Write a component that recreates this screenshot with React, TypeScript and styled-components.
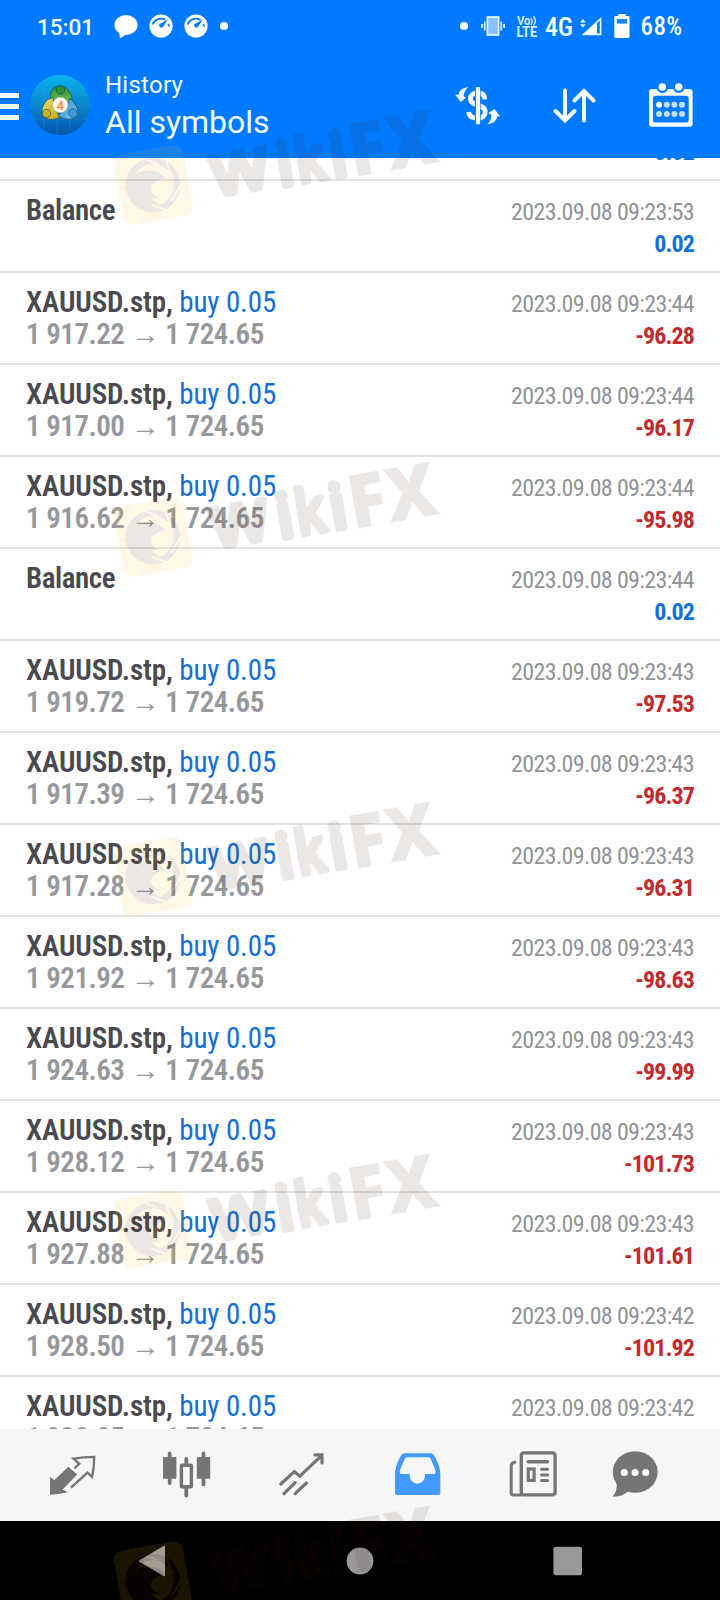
import React from "react";
import styled, { createGlobalStyle } from "styled-components";

const GlobalStyle = createGlobalStyle`
  * { box-sizing: border-box; }
  body { margin: 0; background: #fff; font-family: Roboto, sans-serif; }
  svg { display: block; flex: none; }
`;

const Screen = styled.div`
  position: relative;
  width: 720px;
  height: 1600px;
  overflow: hidden;
  display: flex;
  flex-direction: column;
  background: #fff;
`;

const Header = styled.header`
  height: 158px;
  flex: none;
  background: #007aff;
  color: #f2fbff;
`;

const StatusBar = styled.div`
  height: 52px;
  display: flex;
  align-items: center;
  justify-content: space-between;
  padding: 0 36px 0 37px;
`;

const StatusGroup = styled.div`
  display: flex;
  align-items: center;
`;

const Slot = styled.div<{ $gap: number }>`
  flex: none;
  margin-left: ${(p) => p.$gap}px;
`;

const Clock = styled.span`
  font-size: 22.5px;
  line-height: 26px;
  font-weight: 500;
  width: 65px;
  padding-top: 2px;
`;

const StatusText = styled.div<{ $width: number; $size: number; $spacing?: number }>`
  font-family: "Roboto Condensed", Roboto, sans-serif;
  font-size: ${(p) => p.$size}px;
  line-height: 26px;
  font-weight: 500;
  letter-spacing: ${(p) => p.$spacing ?? 0}px;
  width: ${(p) => p.$width}px;
  padding-top: 2px;
  white-space: nowrap;
`;

const Toolbar = styled.div`
  height: 106px;
  display: flex;
  align-items: center;
  padding-right: 26px;
`;

const MenuButton = styled.div`
  width: 30px;
  height: 27px;
  margin-top: 3px;
  display: flex;
  flex-direction: column;
  justify-content: space-between;
`;

const MenuBar = styled.span`
  width: 19px;
  height: 5px;
  background: #f2fbff;
`;

const Titles = styled.div`
  margin-left: 15px;
  padding-top: 2px;
  flex: 1;
  white-space: nowrap;
`;

const Subtitle = styled.div`
  font-size: 24px;
  line-height: 30px;
  letter-spacing: 0.25px;
`;

const Title = styled.div`
  font-size: 32px;
  line-height: 40px;
  padding-top: 2px;
`;

const Actions = styled.div`
  display: flex;
  gap: 48px;
`;

const List = styled.main`
  flex: 1;
  min-height: 0;
  overflow: hidden;
`;

const Row = styled.div<{ $first?: boolean }>`
  height: 92px;
  margin-top: ${(p) => (p.$first ? "-69px" : "0")};
  padding: 13px 26px 0;
  border-bottom: 2px solid #e3e3e3;
  font-family: "Roboto Condensed", Roboto, sans-serif;
`;

const Line = styled.div`
  height: 32px;
  line-height: 32px;
  display: flex;
  justify-content: space-between;
  align-items: baseline;
  white-space: nowrap;
`;

const Symbol = styled.span<{ $tight?: boolean }>`
  font-size: 29px;
  font-weight: 600;
  letter-spacing: ${(p) => (p.$tight ? "-0.45px" : "-0.1px")};
  color: #49494f;
`;

const Side = styled.span`
  font-weight: 400;
  color: #1270d4;
`;

const Prices = styled.span`
  font-size: 29px;
  font-weight: 600;
  letter-spacing: -0.5px;
  color: #97989b;
`;

const Time = styled.span`
  font-size: 24px;
  font-weight: 400;
  letter-spacing: -0.65px;
  color: #929397;
`;

const Amount = styled.span<{ $gain?: boolean }>`
  font-size: 24px;
  font-weight: 700;
  letter-spacing: -0.9px;
  color: ${(p) => (p.$gain ? "#1272d6" : "#c22a2c")};
`;

const TabBar = styled.nav`
  height: 92px;
  flex: none;
  display: flex;
  align-items: center;
  gap: 67px;
  padding-left: 48px;
  background: #f6f6f6;

  svg:nth-child(4) { margin-left: 1px; }
  svg:last-child { margin-left: -13px; }
`;

const SystemBar = styled.footer`
  height: 79px;
  flex: none;
  display: flex;
  align-items: center;
  gap: 176px;
  padding-left: 136px;
  background: #000;
`;

const WatermarkLayer = styled.div<{ $top: number }>`
  position: absolute;
  left: 100px;
  top: ${(p) => p.$top}px;
  opacity: 0.1;
  pointer-events: none;
`;

const ChatBubble = () => (
  <svg width="24" height="24" viewBox="0 0 24 24" fill="#fff">
    <ellipse cx="12" cy="11" rx="11.6" ry="10" />
    <path d="M5 17 L6 24.3 L14 19.5Z" />
  </svg>
);

const Gauge = () => (
  <svg width="24" height="24" viewBox="0 0 24 24">
    <circle cx="12" cy="12" r="11.6" fill="#fff" />
    <path d="M3.6 10.5 C5.5 5 12 3.2 16.5 6" fill="none" stroke="#007aff" strokeWidth="1.8" />
    <path d="M19 5.6 L13.8 13 A2.3 2.3 0 0 1 10.3 10.2Z" fill="#007aff" />
    <path d="M19 10 L20.6 12.5" stroke="#007aff" strokeWidth="1.4" />
  </svg>
);

const Dot = () => (
  <svg width="8" height="8" viewBox="0 0 8 8">
    <circle cx="4" cy="4" r="4" fill="#fff" />
  </svg>
);

const Vibrate = () => (
  <svg width="24" height="20" viewBox="0 0 24 20" stroke="#e8f6ff" strokeWidth="1.7">
    <rect x="6.4" y="1" width="11.2" height="18" fill="#8cc2fb" />
    <path d="M3.7 5.5V14.5M20.3 5.5V14.5M0.9 8V12M23.1 8V12" fill="none" />
  </svg>
);

const VoLte = () => (
  <svg width="22" height="24" viewBox="0 0 22 24" fill="#d6eaff">
    <text x="1" y="11.2" fontSize="12.5" fontWeight="700" fontFamily="Roboto" textLength="13.5" lengthAdjust="spacingAndGlyphs">Vo</text>
    <path d="M15 4 Q17.2 7.5 15 11 M17.4 2.2 Q21.4 6.8 17.4 11.6" fill="none" stroke="#d6eaff" strokeWidth="1.4" />
    <text x="0.5" y="23.2" fontSize="14" fontWeight="800" fontFamily="Roboto" textLength="20.5" lengthAdjust="spacingAndGlyphs">LTE</text>
  </svg>
);

const Signal = () => (
  <svg width="22" height="20" viewBox="0 0 22 20" fill="#f2fbff">
    <path d="M1.6 19.3 L21.4 1 V19.3Z" />
    <path d="M17 7 L19.8 4.5 V17.6 H17Z" fill="#007aff" />
    <path d="M0 6.4 L2.9 3 L5.8 6.4Z M0 8.2 L2.9 11.6 L5.8 8.2Z" />
  </svg>
);

const Battery = () => (
  <svg width="16" height="24" viewBox="0 0 16 24" fill="#fff">
    <rect x="4.3" y="0" width="7.4" height="4" />
    <rect x="0.3" y="2" width="15.2" height="22" rx="1.4" />
    <rect x="2.8" y="5" width="10.2" height="4.6" fill="#1b86fb" />
  </svg>
);

const AppLogo = () => (
  <svg width="60" height="60" viewBox="0 0 60 60">
    <defs>
      <linearGradient id="sky" x1="0" y1="0" x2="0" y2="1">
        <stop offset="0" stopColor="#08b4ea" />
        <stop offset="0.5" stopColor="#0a86d0" />
        <stop offset="1" stopColor="#0455ae" />
      </linearGradient>
      <linearGradient id="leaf" x1="0" y1="0" x2="0" y2="1">
        <stop offset="0" stopColor="#2c8c2c" />
        <stop offset="1" stopColor="#7cc465" />
      </linearGradient>
      <linearGradient id="gold" x1="0" y1="0" x2="1" y2="1">
        <stop offset="0" stopColor="#ece06a" />
        <stop offset="1" stopColor="#bfa51c" />
      </linearGradient>
      <linearGradient id="aqua" x1="0" y1="0" x2="1" y2="1">
        <stop offset="0" stopColor="#2f86cc" />
        <stop offset="1" stopColor="#7cc8f4" />
      </linearGradient>
    </defs>
    <circle cx="30" cy="30" r="30" fill="url(#sky)" />
    <path d="M14 5V55M27 0V60M40 2V58M2 19H58M0 31H60M3 44H57" stroke="#39a5e4" strokeWidth="0.6" opacity="0.45" />
    <g stroke="#174f5e" strokeWidth="0.7">
      <path d="M21 24 C19 16 24 11 30 11 C36 11 42 17 42 25 L39 31 L24 26Z" fill="url(#leaf)" />
      <path d="M23 23 C15 23 11 33 12 40 C15 45 24 46 30 42 L25 34Z" fill="url(#gold)" />
      <path d="M40 23 C45 28 49 35 48 40 C45 45 34 46 28 40 L36 35Z" fill="url(#aqua)" />
      <circle cx="30.5" cy="15" r="4.2" fill="#2d9130" />
      <circle cx="16.5" cy="38.5" r="4.2" fill="#cbb22b" />
      <circle cx="43" cy="38" r="4.2" fill="#3e9be0" />
    </g>
    <circle cx="30.3" cy="30" r="7.7" fill="#fbf6f1" stroke="#b9b79a" strokeWidth="0.6" />
    <text x="30.3" y="34.6" textAnchor="middle" fontFamily="Roboto" fontSize="13" fontWeight="700" fill="#ee9152">4</text>
  </svg>
);

const CurrencyIcon = () => (
  <svg width="48" height="48" viewBox="0 0 48 48" fill="#f4fcff">
    <path d="M14.5 6 Q5 7 4.6 14 L1 13.3 L6.7 21 L12.3 16.6 L9.6 15.6 Q10 9.5 14.5 6Z" />
    <path d="M33.3 43.2 Q42.5 42 43.2 35.3 L46.2 35.6 L40.5 28 L34.3 32 L37.4 33.6 Q37.6 39.5 33.3 43.2Z" />
    <path d="M30.8 18.4 C30.8 13.5 27.5 12 24 12 C18.5 12 16.3 14.8 16.3 17.8 C16.3 25.6 31.2 22.4 31.2 30.8 C31.2 35 28 37.2 24 37.2 C18.8 37.2 15 35.4 14.6 31" fill="none" stroke="#f4fcff" strokeWidth="4.8" />
    <path d="M23.8 9 V41" stroke="#007aff" strokeWidth="5.8" />
    <path d="M24 6.2 V43.2" stroke="#f4fcff" strokeWidth="4.2" />
  </svg>
);

const SortIcon = () => (
  <svg width="48" height="48" viewBox="0 0 48 48" fill="none" stroke="#f4fcff" strokeWidth="4" strokeLinecap="round">
    <path d="M15 9.5 V38.5 M5.5 30 L15 39.5 L24.5 30" />
    <path d="M34 39.5 V10.5 M24.5 19.5 L34 10 L43.5 19.5" />
  </svg>
);

const CalendarIcon = () => (
  <svg width="48" height="48" viewBox="0 0 48 48">
    <rect x="3" y="8" width="43.6" height="37.8" rx="3" fill="#f4fcff" />
    <rect x="6.9" y="14.8" width="35.8" height="26.8" rx="3.2" fill="#007aff" />
    {[16.3, 32.7].map((x) => (
      <circle key={x} cx={x} cy="6" r="4.9" fill="#f4fcff" stroke="#007aff" strokeWidth="2.2" />
    ))}
    {[23.7, 33].map((y) =>
      [13.1, 20.8, 28.4, 36].map((x) => (
        <circle key={`${x}-${y}`} cx={x} cy={y} r="3" fill={x < 14 && y < 30 ? "#fff" : "#bde0ff"} />
      ))
    )}
  </svg>
);

const QuotesIcon = () => (
  <svg width="48" height="48" viewBox="0 0 48 48">
    <path d="M20.3 15.7 L29.2 23.6 L14.6 38.4 L19.8 41.2 Q11 43.4 2 43.8 V25.8 L6.2 29.2Z" fill="#757575" />
    <path d="M26.3 17.3 L31.3 12.8 L25.4 7.6 Q36 5.9 46.2 5.8 Q46.2 17 44 26 L39.5 21.6 L23 36.6" fill="none" stroke="#757575" strokeWidth="2.3" />
  </svg>
);

const ChartIcon = () => (
  <svg width="48" height="48" viewBox="0 0 48 48">
    <g fill="#757575">
      <rect x="0" y="6" width="13.4" height="21.8" rx="1" />
      <rect x="33.8" y="6" width="13.4" height="21.8" rx="1" />
    </g>
    <path d="M6.7 2.4 V32 M40.5 2.4 V33.4 M23.3 8 V13 M23.3 37 V44.5" stroke="#757575" strokeWidth="3.8" strokeLinecap="round" />
    <rect x="18.4" y="14.2" width="10" height="21.5" rx="0.5" fill="#f6f6f6" stroke="#757575" strokeWidth="3.4" />
  </svg>
);

const TradeIcon = () => (
  <svg width="48" height="48" viewBox="0 0 48 48" fill="none" stroke="#757575" strokeWidth="3.2" strokeLinecap="round">
    <path d="M2.8 33 L16.4 20.6 L21.9 25.2 L43.3 4.8 M37 3.9 H44 V12" />
    <path d="M6 42.6 L17.2 31.6 M17.2 42.6 L28.4 32" />
  </svg>
);

const HistoryIcon = () => (
  <svg width="48" height="48" viewBox="0 0 48 48">
    <path
      fillRule="evenodd"
      fill="#429aff"
      d="M10.5 2.3 H36.7 Q39 2.3 40.2 4.5 C43.5 11 46.3 15.5 46.3 24 V42 Q46.3 44 44.3 44 H3 Q1 44 1 42 V24 C1 15.5 3.8 11 7 4.5 Q8.2 2.3 10.5 2.3Z M12.8 6.3 Q11.4 6.3 10.7 7.8 L5.9 19.5 Q5.2 23 8 23 H15.7 V24.5 A7.65 8.2 0 0 0 31 24.5 V23 H39.4 Q42.2 23 41.5 19.5 L36.7 7.8 Q36 6.3 34.6 6.3Z"
    />
  </svg>
);

const NewsIcon = () => (
  <svg width="48" height="48" viewBox="0 0 48 48" fill="none" stroke="#757575" strokeLinecap="round">
    <rect x="12.3" y="1.9" width="33.8" height="42" rx="2.5" strokeWidth="3.4" />
    <path d="M12 43.9 H4.5 Q2.2 43.9 2.2 41.5 V15 Q2.2 11.6 5.8 11.2" strokeWidth="3" />
    <path d="M19.3 10.8 H38.4" strokeWidth="3.6" />
    <path d="M32.5 18.2 H38.6 M32.5 24 H38.6 M32.5 29.6 H38.6" strokeWidth="3" />
    <rect x="19.3" y="18" width="5.8" height="11.4" strokeWidth="3.2" />
  </svg>
);

const MessagesIcon = () => (
  <svg width="48" height="48" viewBox="0 0 48 48" fill="#757575">
    <ellipse cx="24.2" cy="21" rx="22.5" ry="20.8" />
    <path d="M5.5 31 Q7 39.5 1.6 45.6 Q11.5 46 17.5 40Z" />
    {[13.3, 24, 34.7].map((x) => (
      <circle key={x} cx={x} cy="21.4" r="3.5" fill="#fff" />
    ))}
  </svg>
);

const BackIcon = () => (
  <svg width="32" height="32" viewBox="0 0 32 32">
    <path d="M3 16 L28.5 1 V31Z" fill="#999" stroke="#999" strokeWidth="1" strokeLinejoin="round" />
  </svg>
);

const HomeIcon = () => (
  <svg width="32" height="32" viewBox="0 0 32 32">
    <circle cx="16" cy="16" r="13.4" fill="#999" />
  </svg>
);

const RecentsIcon = () => (
  <svg width="32" height="32" viewBox="0 0 32 32">
    <rect x="1.4" y="1.7" width="28.6" height="28.6" rx="2.6" fill="#999" />
  </svg>
);

const rounded = {
  strokeLinejoin: "round",
  stroke: "#4a1c10",
  strokeWidth: 6,
  fontFamily: "Noto Sans",
  fontWeight: 500,
} as const;

const Watermark = ({ top }: { top: number }) => (
  <WatermarkLayer $top={top}>
    <svg width="350" height="150" viewBox="0 0 350 150">
      <g transform="translate(53 87) rotate(-10)">
        <rect x="-35" y="-35.5" width="70" height="71" rx="9" fill="#ffc21e" />
        <circle r="24" fill="none" stroke="#4a1c10" strokeWidth="6.5" />
        <path d="M-26 8 L-29 -3 Q-24 -4 -22 -9 C-16 -15 -8 -18 0 -14 C7 -14 12 -9 13 -3 L9 -5 C6 -3 3 -3 0 -1 C-5 3 -3 11 5 14 L-3 13 L3 22 C-10 22 -20 18 -26 8Z" fill="#4a1c10" />
        <path d="M-6 -29 L9 -19 M17 -21 L21 -3 M29 3 L15 19 M10 28 L-5 19" stroke="#ffc21e" strokeWidth="2.2" />
      </g>
      <g transform="translate(108 103) rotate(-10)" fill="#4a1c10">
        <text x="8" y="-3.5" fontSize="55" textLength="57" lengthAdjust="spacingAndGlyphs" {...rounded}>W</text>
        <text x="73.5" y="-1.5" fontSize="61" {...rounded}>i</text>
        <text x="93" y="-2" fontSize="61" textLength="29" lengthAdjust="spacingAndGlyphs" {...rounded}>k</text>
        <text x="127.5" y="-1.5" fontSize="61" {...rounded}>i</text>
        <text x="147" y="2" fontSize="75" fontFamily="Open Sans" fontWeight="800" textLength="89" lengthAdjust="spacingAndGlyphs">FX</text>
      </g>
    </svg>
  </WatermarkLayer>
);

type Entry = { time: string; amount: string; from?: string };

const entries: Entry[] = [
  { time: "09:23:53", amount: "0.02" },
  { time: "09:23:53", amount: "0.02" },
  { time: "09:23:44", amount: "-96.28", from: "1 917.22" },
  { time: "09:23:44", amount: "-96.17", from: "1 917.00" },
  { time: "09:23:44", amount: "-95.98", from: "1 916.62" },
  { time: "09:23:44", amount: "0.02" },
  { time: "09:23:43", amount: "-97.53", from: "1 919.72" },
  { time: "09:23:43", amount: "-96.37", from: "1 917.39" },
  { time: "09:23:43", amount: "-96.31", from: "1 917.28" },
  { time: "09:23:43", amount: "-98.63", from: "1 921.92" },
  { time: "09:23:43", amount: "-99.99", from: "1 924.63" },
  { time: "09:23:43", amount: "-101.73", from: "1 928.12" },
  { time: "09:23:43", amount: "-101.61", from: "1 927.88" },
  { time: "09:23:42", amount: "-101.92", from: "1 928.50" },
  { time: "09:23:42", amount: "-103.10", from: "1 930.85" },
];

const HistoryRow = ({ entry, first }: { entry: Entry; first: boolean }) => (
  <Row $first={first}>
    <Line>
      {entry.from ? (
        <Symbol>
          XAUUSD.stp, <Side>buy 0.05</Side>
        </Symbol>
      ) : (
        <Symbol $tight>Balance</Symbol>
      )}
      <Time>2023.09.08 {entry.time}</Time>
    </Line>
    <Line>
      <Prices>{entry.from ? `${entry.from} → 1 724.65` : "\u00a0"}</Prices>
      <Amount $gain={!entry.from}>{entry.amount}</Amount>
    </Line>
  </Row>
);

export default function App() {
  return (
    <Screen>
      <GlobalStyle />
      <Header>
        <StatusBar>
          <StatusGroup>
            <Clock>15:01</Clock>
            <Slot $gap={11.5}><ChatBubble /></Slot>
            <Slot $gap={11}><Gauge /></Slot>
            <Slot $gap={11}><Gauge /></Slot>
            <Slot $gap={12}><Dot /></Slot>
          </StatusGroup>
          <StatusGroup>
            <Dot />
            <Slot $gap={13}><Vibrate /></Slot>
            <Slot $gap={11}><VoLte /></Slot>
            <Slot $gap={7}><StatusText $width={27} $size={26} $spacing={-0.3}>4G</StatusText></Slot>
            <Slot $gap={8}><Signal /></Slot>
            <Slot $gap={12}><Battery /></Slot>
            <Slot $gap={10.5}><StatusText $width={43.5} $size={25} $spacing={0.4}>68%</StatusText></Slot>
          </StatusGroup>
        </StatusBar>
        <Toolbar>
          <MenuButton>
            <MenuBar />
            <MenuBar />
            <MenuBar />
          </MenuButton>
          <AppLogo />
          <Titles>
            <Subtitle>History</Subtitle>
            <Title>All symbols</Title>
          </Titles>
          <Actions>
            <CurrencyIcon />
            <SortIcon />
            <CalendarIcon />
          </Actions>
        </Toolbar>
      </Header>
      <List>
        {entries.map((entry, i) => (
          <HistoryRow key={i} entry={entry} first={i === 0} />
        ))}
      </List>
      <TabBar>
        <QuotesIcon />
        <ChartIcon />
        <TradeIcon />
        <HistoryIcon />
        <NewsIcon />
        <MessagesIcon />
      </TabBar>
      <SystemBar>
        <BackIcon />
        <HomeIcon />
        <RecentsIcon />
      </SystemBar>
      {[98, 450, 790, 1142, 1494].map((top) => (
        <Watermark key={top} top={top} />
      ))}
    </Screen>
  );
}
